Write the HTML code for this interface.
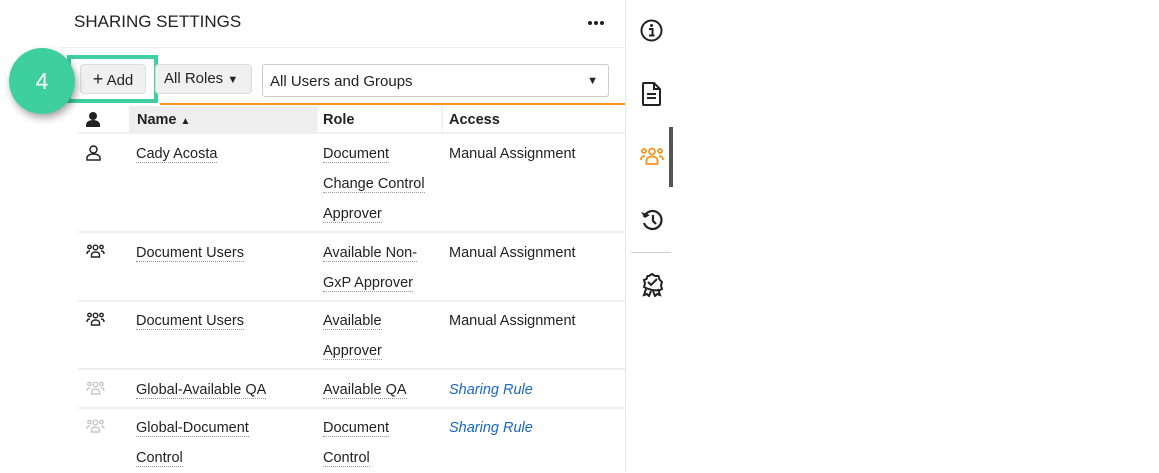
<!DOCTYPE html>
<html><head><style>
*{margin:0;padding:0;box-sizing:border-box}
body{width:1159px;height:472px;background:#fff;font-family:"Liberation Sans",sans-serif;color:#222;position:relative;overflow:hidden;font-size:14.5px}
.a{position:absolute}
.t{position:absolute;line-height:30px}
.t span{border-bottom:1px dotted #999}
.hr{position:absolute;left:78px;width:547px;height:2px;background:#f0f0f0}
.sr{color:#1a66c0;font-style:italic}
</style></head><body>
<div class="a" style="left:74px;top:12px;font-size:17px;color:#222">SHARING SETTINGS</div>
<svg class="a" style="left:587px;top:20px" width="18" height="6"><circle cx="3" cy="3" r="2" fill="#222"/><circle cx="9" cy="3" r="2" fill="#222"/><circle cx="15" cy="3" r="2" fill="#222"/></svg>
<div class="a" style="left:60px;top:47px;width:565px;height:1px;background:#eee"></div>
<div class="a" style="left:625px;top:0;width:1px;height:472px;background:#e6e6e6"></div>

<div class="a" style="left:80px;top:64px;width:66px;height:30px;border:1px solid #ddd;border-radius:4px;background:#f0f0f0;font-size:15px;line-height:28px;text-align:center"><span style="font-size:18px">+</span> Add</div>
<div class="a" style="left:67px;top:55px;width:91px;height:48px;border:4px solid #3fcfa0"></div>
<div class="a" style="left:9px;top:48px;width:66px;height:66px;border-radius:50%;background:#3ecf9e;box-shadow:2px 4px 8px rgba(0,0,0,.35);color:#fff;font-size:23px;text-align:center;line-height:66px">4</div>
<div class="a" style="left:155px;top:64px;width:97px;height:30px;border:1px solid #ddd;border-radius:4px;background:#f0f0f0;font-size:15px;line-height:28px;padding-left:8px">All Roles <span style="font-size:11px">▼</span></div>
<div class="a" style="left:262px;top:64px;width:347px;height:33px;border:1px solid #ccc;border-radius:3px;font-size:15px;line-height:33px;padding-left:7px">All Users and Groups<span style="position:absolute;right:10px;font-size:11px">▼</span></div>
<div class="a" style="left:160px;top:103px;width:465px;height:2px;background:#f7941d"></div>

<div class="a" style="left:129px;top:106px;width:187px;height:27px;background:#eee"></div>
<svg class="a" style="left:85px;top:111px" width="16" height="17" viewBox="0 0 16 17"><circle cx="8" cy="5" r="4" fill="#222"/><path d="M1 16v-2c0-3 3-5 7-5s7 2 7 5v2z" fill="#222"/></svg>
<div class="a" style="left:137px;top:112px;font-weight:bold">Name <span style="font-size:10px">▲</span></div>
<div class="a" style="left:323px;top:112px;font-weight:bold">Role</div>
<div class="a" style="left:449px;top:112px;font-weight:bold">Access</div>
<div class="a" style="left:316px;top:106px;width:2px;height:27px;background:#f2f2f2"></div>
<div class="a" style="left:441px;top:106px;width:2px;height:27px;background:#f2f2f2"></div>
<div class="hr" style="top:132px"></div>

<svg class="a" style="left:86px;top:145px" width="15" height="16" viewBox="0 0 15 16"><circle cx="7.5" cy="4.5" r="3.5" fill="none" stroke="#222" stroke-width="1.5"/><path d="M1 15v-2c0-2.5 3-4 6.5-4s6.5 1.5 6.5 4v2z" fill="none" stroke="#222" stroke-width="1.5"/></svg>
<div class="t" style="left:136px;top:139px"><span>Cady Acosta</span></div>
<div class="t" style="left:323px;top:139px"><span>Document</span><br><span>Change Control</span><br><span>Approver</span></div>
<div class="t" style="left:449px;top:139px">Manual Assignment</div>
<div class="hr" style="top:231px"></div>

<svg class="a" style="left:86px;top:244px" width="19" height="14" viewBox="0 0 19 14"><g fill="none" stroke="#222" stroke-width="1.4"><circle cx="9.5" cy="3.5" r="2.3"/><circle cx="3.5" cy="3" r="1.7"/><circle cx="15.5" cy="3" r="1.7"/><path d="M5.5 13v-2c0-2 2-3 4-3s4 1 4 3v2z"/><path d="M1 10c0-2 1-3 3-3M18 10c0-2-1-3-3-3"/></g></svg>
<div class="t" style="left:136px;top:238px"><span>Document Users</span></div>
<div class="t" style="left:323px;top:238px"><span>Available Non-</span><br><span>GxP Approver</span></div>
<div class="t" style="left:449px;top:238px">Manual Assignment</div>
<div class="hr" style="top:300px"></div>

<svg class="a" style="left:86px;top:312px" width="19" height="14" viewBox="0 0 19 14"><g fill="none" stroke="#222" stroke-width="1.4"><circle cx="9.5" cy="3.5" r="2.3"/><circle cx="3.5" cy="3" r="1.7"/><circle cx="15.5" cy="3" r="1.7"/><path d="M5.5 13v-2c0-2 2-3 4-3s4 1 4 3v2z"/><path d="M1 10c0-2 1-3 3-3M18 10c0-2-1-3-3-3"/></g></svg>
<div class="t" style="left:136px;top:306px"><span>Document Users</span></div>
<div class="t" style="left:323px;top:306px"><span>Available</span><br><span>Approver</span></div>
<div class="t" style="left:449px;top:306px">Manual Assignment</div>
<div class="hr" style="top:368px"></div>

<svg class="a" style="left:86px;top:381px" width="19" height="14" viewBox="0 0 19 14"><g fill="none" stroke="#c8c8c8" stroke-width="1.4"><circle cx="9.5" cy="3.5" r="2.3"/><circle cx="3.5" cy="3" r="1.7"/><circle cx="15.5" cy="3" r="1.7"/><path d="M5.5 13v-2c0-2 2-3 4-3s4 1 4 3v2z"/><path d="M1 10c0-2 1-3 3-3M18 10c0-2-1-3-3-3"/></g></svg>
<div class="t" style="left:136px;top:375px"><span>Global-Available QA</span></div>
<div class="t" style="left:323px;top:375px"><span>Available QA</span></div>
<div class="t sr" style="left:449px;top:375px">Sharing Rule</div>
<div class="hr" style="top:407px"></div>

<svg class="a" style="left:86px;top:419px" width="19" height="14" viewBox="0 0 19 14"><g fill="none" stroke="#c8c8c8" stroke-width="1.4"><circle cx="9.5" cy="3.5" r="2.3"/><circle cx="3.5" cy="3" r="1.7"/><circle cx="15.5" cy="3" r="1.7"/><path d="M5.5 13v-2c0-2 2-3 4-3s4 1 4 3v2z"/><path d="M1 10c0-2 1-3 3-3M18 10c0-2-1-3-3-3"/></g></svg>
<div class="t" style="left:136px;top:413px"><span>Global-Document</span><br><span>Control</span></div>
<div class="t" style="left:323px;top:413px"><span>Document</span><br><span>Control</span></div>
<div class="t sr" style="left:449px;top:413px">Sharing Rule</div>

<svg class="a" style="left:640px;top:19px" width="23" height="23" viewBox="0 0 23 23"><circle cx="11.5" cy="11.5" r="10" fill="none" stroke="#222" stroke-width="2"/><circle cx="11.5" cy="6.5" r="1.5" fill="#222"/><path d="M9 10h3.5v6.5M9 16.5h5.5" stroke="#222" stroke-width="2" fill="none"/></svg>
<svg class="a" style="left:642px;top:82px" width="19" height="24" viewBox="0 0 19 24"><path d="M2 1h10l6 6v15a1 1 0 0 1-1 1H2a1 1 0 0 1-1-1V2a1 1 0 0 1 1-1z M12 1v6h6" fill="none" stroke="#222" stroke-width="2"/><path d="M5 12h9M5 16h9" stroke="#222" stroke-width="2"/></svg>
<svg class="a" style="left:640px;top:147px" width="24" height="18" viewBox="0 0 24 18"><g fill="none" stroke="#f7941d" stroke-width="1.8"><circle cx="12" cy="4.5" r="3"/><circle cx="4" cy="4" r="2"/><circle cx="20" cy="4" r="2"/><path d="M6.5 17v-3c0-3 2.5-4.5 5.5-4.5s5.5 1.5 5.5 4.5v3z"/><path d="M1 13c0-3 1.5-4 4-4M23 13c0-3-1.5-4-4-4"/></g></svg>
<div class="a" style="left:669px;top:127px;width:4px;height:60px;background:#555"></div>
<svg class="a" style="left:640px;top:208px" width="24" height="24" viewBox="0 0 24 24"><path d="M4 9a9 9 0 1 1 0 6" fill="none" stroke="#222" stroke-width="2.2"/><path d="M1 4l4 6 5-3z" fill="#222"/><path d="M13 7v6l3 3" fill="none" stroke="#222" stroke-width="2.2"/></svg>
<div class="a" style="left:631px;top:252px;width:40px;height:1px;background:#ccc"></div>
<svg class="a" style="left:641px;top:273px" width="22" height="24" viewBox="0 0 22 24"><g fill="none" stroke="#222" stroke-width="2"><path d="M11 1l3 2h3.5l1 3.5 2.5 2.5-1 3.5 1 3.5-3 1.5L11 17l-5-1.5-3-1.5 1-3.5-1-3.5L5.5 6 6.5 3H8z"/><path d="M7 9l3 3 6-6"/><path d="M5 16l-2 6 3-1 2 2 2-5M17 16l2 6-3-1-2 2-2-5"/></g></svg>
</body></html>
